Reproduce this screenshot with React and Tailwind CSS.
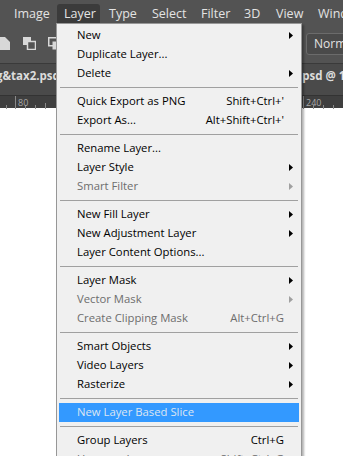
import React from "react";

const Arrow = ({ disabled }) => (
  <svg width="4" height="7" viewBox="0 0 4 7" className="absolute right-[6px] top-[6px]">
    <polygon points="0,0 4,3.5 0,7" fill={disabled ? "#a0a0a0" : "#000"} />
  </svg>
);

const Row = ({ label, shortcut, arrow, disabled, active }) => (
  <div
    className={
      "relative h-[19px] flex items-center pl-[18px] pr-[15px] " +
      (active ? "bg-[#3399ff] text-[#dde6f2]" : disabled ? "text-[#6d6d6d]" : "text-black")
    }
  >
    <span className="flex-1 whitespace-nowrap">{label}</span>
    {shortcut && <span className="whitespace-nowrap">{shortcut}</span>}
    {arrow && <Arrow disabled={disabled} />}
  </div>
);

const Sep = () => (
  <div className="h-[9px] flex items-center pl-[1px] pr-[1px]">
    <div className="h-px w-full bg-[#a0a0a0]" />
  </div>
);

export default function App() {
  const menuFont = { fontFamily: "'Open Sans', 'Noto Sans', sans-serif" };
  return (
    <div
      className="relative w-[343px] h-[456px] overflow-hidden bg-white"
      style={menuFont}
    >
      {/* menubar */}
      <div className="h-[24px] bg-[#535353] flex items-end text-[12.5px] text-[#e3e3e3]">
        <div className="shrink-0 w-[57px] h-[20px] pl-[14px] flex items-center">Image</div>
        <div className="shrink-0 w-[43px] h-[20px] pl-[7px] flex items-center bg-[#3b3b3b] rounded-t-[3px]">Layer</div>
        <div className="shrink-0 w-[45px] h-[20px] pl-[9px] flex items-center">Type</div>
        <div className="shrink-0 w-[49px] h-[20px] pl-[7px] flex items-center">Select</div>
        <div className="shrink-0 w-[43px] h-[20px] pl-[7px] flex items-center">Filter</div>
        <div className="shrink-0 w-[32px] h-[20px] pl-[7px] flex items-center">3D</div>
        <div className="shrink-0 w-[42px] h-[20px] pl-[7px] flex items-center">View</div>
        <div className="shrink-0 h-[20px] pl-[7px] flex items-center whitespace-nowrap">Window</div>
      </div>

      {/* toolbar */}
      <div className="h-[39px] bg-[#535353] flex items-center">
        <div className="shrink-0 w-[306px] flex items-center -ml-[2px]">
          <svg width="12" height="13" viewBox="0 0 12 13" className="shrink-0">
            <path d="M0 0 H7 L12 5 V13 H0 Z" fill="#d8d8d8" />
          </svg>
          <svg width="13" height="13" viewBox="0 0 13 13" className="ml-[13px] shrink-0">
            <rect x="0" y="0" width="8" height="8" fill="#d8d8d8" />
            <rect x="4.5" y="4.5" width="8" height="8" fill="#535353" stroke="#d8d8d8" strokeWidth="1.5" />
          </svg>
          <svg width="13" height="13" viewBox="0 0 13 13" className="ml-[12px] shrink-0">
            <rect x="0.75" y="0.75" width="8" height="8" fill="none" stroke="#d8d8d8" strokeWidth="1.5" />
            <rect x="4.5" y="4.5" width="8" height="8" fill="#d8d8d8" />
          </svg>
        </div>
        <div className="ml-[2px] shrink-0 h-[22px] w-[52px] rounded-[3px] border border-[#6b6b6b] bg-[#4a4a4a] flex items-center pl-[7px] text-[12px] text-[#e3e3e3]">
          Normal
        </div>
      </div>

      {/* tabs */}
      <div className="h-[32px] bg-[#4a4a4a] border-t border-[#3a3a3a] flex items-start pt-[3px] justify-between text-[11.5px] font-bold text-[#dcdcdc]">
        <span className="-ml-[4px] whitespace-nowrap">g&amp;tax2.psd</span>
        <span className="mr-[-9px] whitespace-nowrap">psd @ 18</span>
      </div>

      {/* ruler */}
      <div className="relative h-[13px] bg-[#3f3f3f] border-t border-[#333] text-[9px] text-[#a8a8a8] leading-none">
        <svg width="343" height="13" className="absolute left-0 top-0">
          <line x1="15.5" y1="0" x2="15.5" y2="13" stroke="#8a8a8a" />
          <line x1="6.5" y1="9" x2="6.5" y2="13" stroke="#8a8a8a" />
          <line x1="25.5" y1="9" x2="25.5" y2="13" stroke="#8a8a8a" />
          <line x1="35.5" y1="9" x2="35.5" y2="13" stroke="#8a8a8a" />
          <line x1="45.5" y1="7" x2="45.5" y2="13" stroke="#8a8a8a" />
          <line x1="303.5" y1="0" x2="303.5" y2="13" stroke="#8a8a8a" />
          <line x1="313.5" y1="9" x2="313.5" y2="13" stroke="#8a8a8a" />
          <line x1="323.5" y1="9" x2="323.5" y2="13" stroke="#8a8a8a" />
          <line x1="333.5" y1="9" x2="333.5" y2="13" stroke="#8a8a8a" />
        </svg>
        <span className="absolute left-[18px] top-[2px]">80</span>
        <span className="absolute left-[306px] top-[2px]">240</span>
      </div>

      {/* dropdown menu */}
      <div className="absolute left-[56px] top-[23px] w-[246px] border border-[#979797] bg-[#f0f0f0] px-[2px] pt-[2px] text-[11.3px] shadow-[2px_2px_2px_rgba(0,0,0,0.3)]">
        <Row label="New" arrow />
        <Row label="Duplicate Layer..." />
        <Row label="Delete" arrow />
        <Sep />
        <Row label="Quick Export as PNG" shortcut="Shift+Ctrl+'" />
        <Row label="Export As..." shortcut="Alt+Shift+Ctrl+'" />
        <Sep />
        <Row label="Rename Layer..." />
        <Row label="Layer Style" arrow />
        <Row label="Smart Filter" arrow disabled />
        <Sep />
        <Row label="New Fill Layer" arrow />
        <Row label="New Adjustment Layer" arrow />
        <Row label="Layer Content Options..." />
        <Sep />
        <Row label="Layer Mask" arrow />
        <Row label="Vector Mask" arrow disabled />
        <Row label="Create Clipping Mask" shortcut="Alt+Ctrl+G" disabled />
        <Sep />
        <Row label="Smart Objects" arrow />
        <Row label="Video Layers" arrow />
        <Row label="Rasterize" arrow />
        <Sep />
        <Row label="New Layer Based Slice" active />
        <Sep />
        <Row label="Group Layers" shortcut="Ctrl+G" />
        <Row label="Ungroup Layers" shortcut="Shift+Ctrl+G" disabled />
        <Row label="Hide Layers" shortcut="Ctrl+," />
      </div>
    </div>
  );
}
